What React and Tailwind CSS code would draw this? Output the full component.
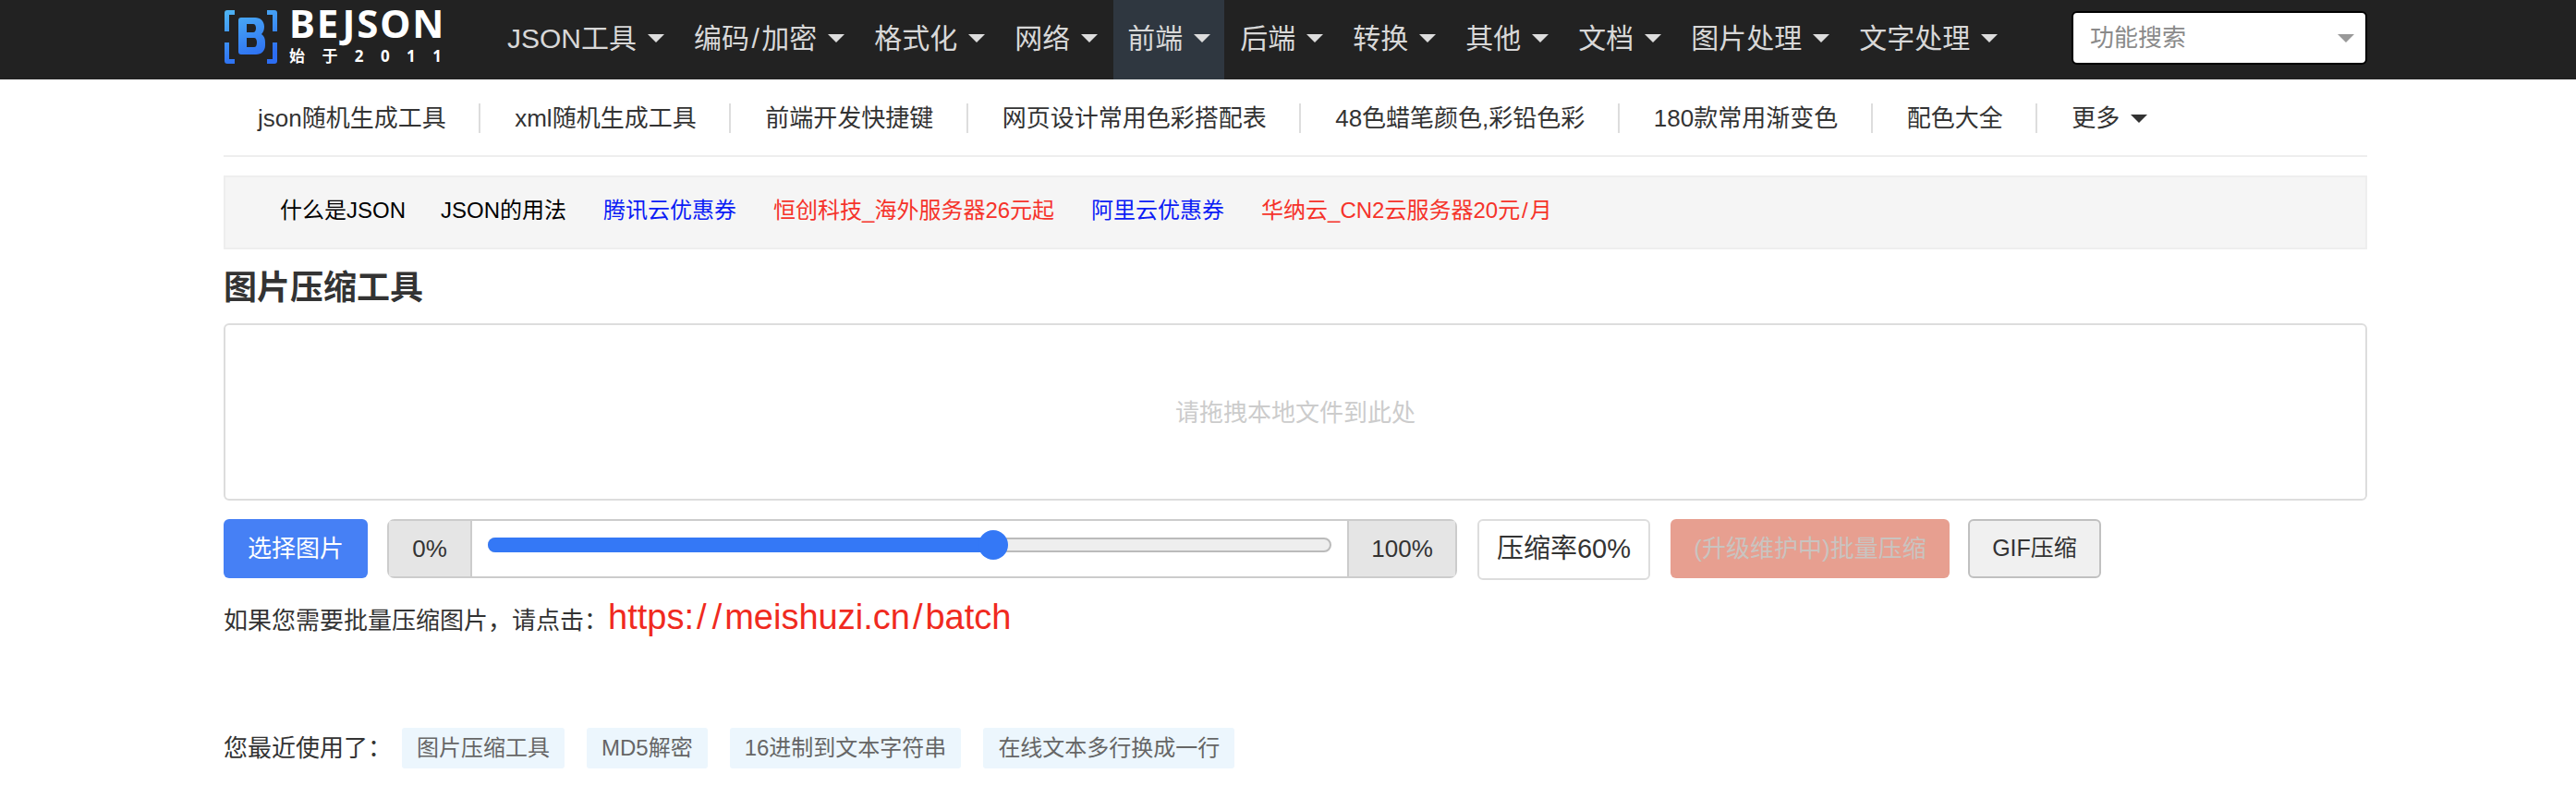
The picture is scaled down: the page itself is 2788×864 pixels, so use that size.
const navItems = ['JSON工具', '编码/加密', '格式化', '网络', '前端', '后端', '转换', '其他', '文档', '图片处理', '文字处理'];
const subItems = ['json随机生成工具', 'xml随机生成工具', '前端开发快捷键', '网页设计常用色彩搭配表', '48色蜡笔颜色,彩铅色彩', '180款常用渐变色', '配色大全'];
const notices = [
    { text: '什么是JSON', cls: 'mr-[-2px] text-black' },
    { text: 'JSON的用法', cls: 'text-black' },
    { text: '腾讯云优惠券', cls: 'text-[#0b1cf5]' },
    { text: '恒创科技_海外服务器26元起', cls: 'text-[#f5332a]' },
    { text: '阿里云优惠券', cls: 'text-[#0b1cf5]' },
    { text: '华纳云_CN2云服务器20元/月', cls: 'text-[#f5332a]' },
];
const recent = ['图片压缩工具', 'MD5解密', '16进制到文本字符串', '在线文本多行换成一行'];

// the slash is wider in the original font
const Slashed = ({ text }) =>
    text.split('/').map((part, i) => (
        <span key={i}>
            {i > 0 && <span className="mx-[0.08em]">/</span>}
            {part}
        </span>
    ));

const Caret = ({ className }) => (
    <span className={`ml-3 inline-block h-0 w-0 border-x-[9px] border-t-[9px] border-x-transparent ${className}`} />
);

const Logo = () => (
    <svg width="57" height="58" viewBox="0 0 57 58" className="ml-[1px] shrink-0">
        <defs>
            <linearGradient id="bj" x1="0" y1="0" x2="0.35" y2="1">
                <stop offset="0" stopColor="#4fb6f4" />
                <stop offset="1" stopColor="#2c6df2" />
            </linearGradient>
        </defs>
        <path
            fill="url(#bj)"
            fillRule="evenodd"
            d="M3 0h8v5H5v18H0V3a3 3 0 0 1 3-3zM46 0h8a3 3 0 0 1 3 3v20h-5V5h-6zM0 35h5v18h6v5H3a3 3 0 0 1-3-3zM52 35h5v20a3 3 0 0 1-3 3h-8v-5h6zM15 11a3 3 0 0 1 3-3h15c6 0 10 4 10 10 0 3-1 6-3 8 3 2 4 5 4 9v3c0 6-4 10-10 10H18a3 3 0 0 1-3-3zM24 15v9h7c2 0 3-2 3-4.500s-1-4.500-3-4.500zM24 30v10h8c2 0 3-2 3-5s-1-5-3-5z"
        />
    </svg>
);

const App = () => {
    return (
        <div className="min-h-[864px] bg-white font-['Liberation_Sans','Noto_Sans_CJK_SC',sans-serif] text-[#333]">
            <header className="h-[86px] bg-[#222]">
                <div className="ml-[242px] flex h-full w-[2320px] items-center">
                    <div className="mb-[4px] flex items-start gap-[13px]">
                        <Logo />
                        <div className="w-[165px] font-['Noto_Sans','Noto_Sans_CJK_SC',sans-serif] font-bold text-white">
                            <div className="text-[42px] leading-[28px] tracking-[1.8px]">BEJSON</div>
                            <div className="mt-[12px] flex justify-between text-[17px] leading-[20px]">
                                {'始于2011'.split('').map((c, i) => (
                                    <span key={i}>{c}</span>
                                ))}
                            </div>
                        </div>
                    </div>
                    <nav className="ml-[56px] flex h-full">
                        {navItems.map((item, i) => (
                            <div
                                key={item}
                                className={`mr-[2px] flex h-full items-center px-[15px] pb-[4px] text-[30px] text-[#d8d8d8] ${i === 4 ? 'bg-[#2f3740]' : ''}`}
                            >
                                <Slashed text={item} />
                                <Caret className="border-t-[#ddd]" />
                            </div>
                        ))}
                    </nav>
                    <div className="mb-[4px] ml-auto flex h-[58px] w-[320px] items-center justify-between rounded-md border-2 border-black bg-white pr-[12px] pl-[18px] text-[26px] text-[#8a8a8a]">
                        功能搜索
                        <span className="h-0 w-0 border-x-[9px] border-t-[9px] border-x-transparent border-t-[#999]" />
                    </div>
                </div>
            </header>

            <main className="ml-[242px] w-[2320px]">
                <div className="flex h-[84px] items-center border-b-2 border-[#eee] pt-[2px] text-[26px]">
                    {subItems.map((item) => (
                        <div key={item} className="flex h-[32px] items-center border-r-2 border-[#ddd] pr-[35.5px] pl-[37px]">
                            {item}
                        </div>
                    ))}
                    <div className="flex items-center pl-[37px]">
                        更多
                        <Caret className="border-t-[#333]" />
                    </div>
                </div>

                <div className="mt-[20px] flex h-[80px] items-center gap-[40px] border-2 border-[#eee] bg-[#f5f5f5] pb-[4px] pl-[59px] text-[24px]">
                    {notices.map((n) => (
                        <span key={n.text} className={n.cls}>
                            <Slashed text={n.text} />
                        </span>
                    ))}
                </div>

                <h1 className="mt-[20px] text-[36px] leading-[44px] font-bold">图片压缩工具</h1>

                <div className="mt-[16px] flex h-[192px] items-center justify-center rounded-md border-2 border-[#ddd] pt-[2px] text-[26px] text-[#ccc]">
                    请拖拽本地文件到此处
                </div>

                <div className="mt-[20px] flex items-start text-[26px]">
                    <div className="flex h-[64px] w-[156px] items-center justify-center rounded-md bg-[#4680f5] text-white">选择图片</div>
                    <div className="ml-[21px] flex h-[64px] w-[1158px] rounded-lg border-2 border-[#ccc]">
                        <div className="flex w-[90px] items-center justify-center border-r-2 border-[#ccc] bg-[#e5e5e5]">0%</div>
                        <div className="flex-1 px-[17px] pt-[18px]">
                            <div className="relative h-[16px] rounded-full border-2 border-[#bbb] bg-[#eee]">
                                <div className="absolute -top-[2px] -left-[2px] h-[16px] w-[60%] rounded-l-full bg-[#3478f6]" />
                                <div className="absolute top-[-10px] left-[60%] h-[32px] w-[32px] -translate-x-1/2 rounded-full bg-[#3478f6]" />
                            </div>
                        </div>
                        <div className="flex w-[117px] items-center justify-center border-l-2 border-[#ccc] bg-[#e5e5e5]">100%</div>
                    </div>
                    <div className="ml-[22px] flex h-[66px] w-[187px] items-center justify-center rounded-md border-2 border-[#ddd] text-[29px]">压缩率60%</div>
                    <div className="ml-[22px] flex h-[64px] w-[302px] items-center justify-center rounded-md bg-[#e79f90] text-[#c9c4c0]">(升级维护中)批量压缩</div>
                    <div className="ml-[20px] flex h-[64px] w-[144px] items-center justify-center rounded-md border-2 border-[#c0c0c0] bg-[#f0f0f0] text-[25px]">GIF压缩</div>
                </div>

                <div className="mt-[18px] flex items-baseline text-[26px]">
                    如果您需要批量压缩图片，请点击：
                    <span className="text-[38px] leading-[44px] text-[#f02a20]">
                        <Slashed text="https://meishuzi.cn/batch" />
                    </span>
                </div>

                <div className="mt-[96px] flex items-center text-[26px]">
                    <span className="w-[193px]">您最近使用了：</span>
                    <div className="flex gap-[24px] text-[24px] text-[#666]">
                        {recent.map((r) => (
                            <span key={r} className="flex h-[44px] items-center rounded-[3px] bg-[#ecf6fd] px-[16px]">
                                {r}
                            </span>
                        ))}
                    </div>
                </div>
            </main>
        </div>
    );
};

export default App;
